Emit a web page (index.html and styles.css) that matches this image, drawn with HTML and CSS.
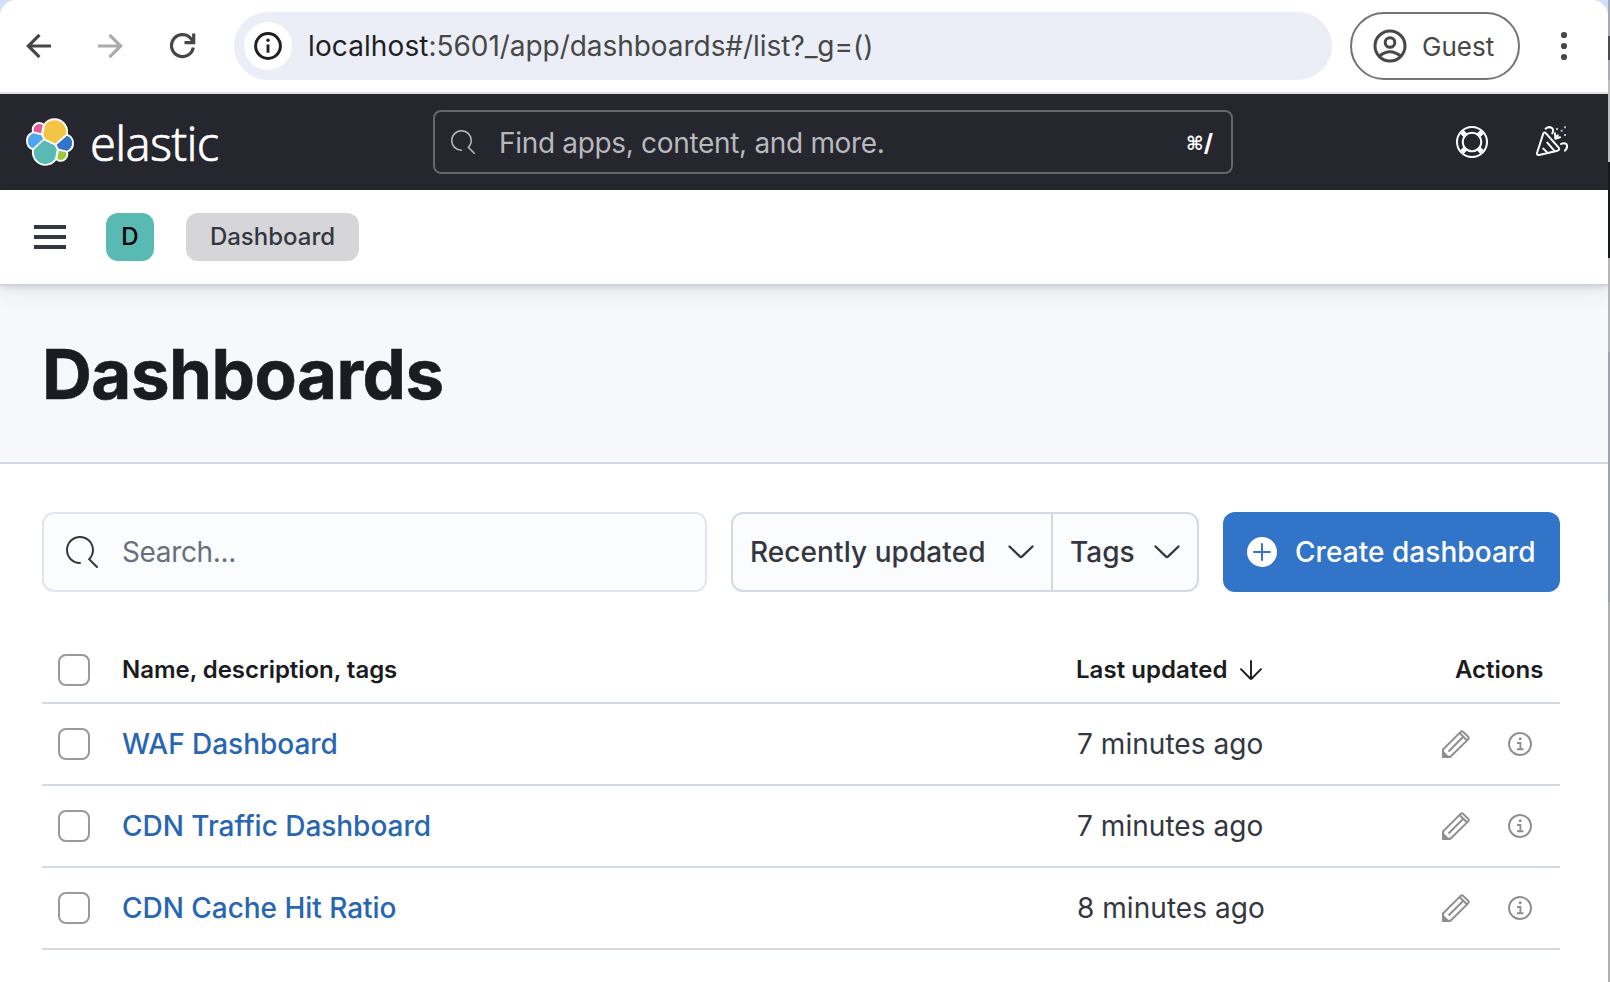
FILE: index.html
```html
<!DOCTYPE html>
<html lang="en">
<head>
<meta charset="utf-8">
<title>Dashboards - Elastic</title>
<link rel="stylesheet" href="styles.css">
</head>
<body>
<svg class="defs" width="0" height="0">
  <symbol id="search" viewBox="0 0 16 16"><path d="M11.271 11.978l3.872 3.873a.502.502 0 00.708 0 .502.502 0 000-.708l-3.565-3.564c2.380-2.747 2.267-6.923-.342-9.532-2.730-2.730-7.170-2.730-9.898 0-2.728 2.729-2.728 7.170 0 9.900a6.955 6.955 0 004.949 2.050.5.5 0 000-1 5.960 5.960 0 01-4.242-1.757 6.010 6.010 0 010-8.486 6.004 6.004 0 018.484 0 6.010 6.010 0 010 8.486.5.5 0 00-.034.738z"/></symbol>
  <symbol id="chevron" viewBox="0 0 26 14"><path d="M1.500 1.500L11.800 11.400Q13 12.500 14.200 11.400L24.500 1.500" fill="none" stroke="currentColor" stroke-width="2.300" stroke-linecap="round"/></symbol>
  <symbol id="pencil" viewBox="0 0 28 28"><path d="M1 26.800V19.500L18.600 1.900Q19.900.700 21.200 1.900L26.100 6.800Q27.300 8.100 26.100 9.400L8.500 26.800ZM6.500 21.500L21 7M17.800 3.200L24.800 10.200" fill="none" stroke="currentColor" stroke-width="2"/><path d="M0 19.500L8.500 28H1.500Q0 28 0 26.500Z"/></symbol>
  <symbol id="info" viewBox="0 0 24 24"><circle cx="12" cy="12" r="11" fill="none" stroke="currentColor" stroke-width="1.900"/><circle cx="12.200" cy="6.800" r="1.500"/><path d="M9 11h3.400v6.200M8.900 17.300h6.600" fill="none" stroke="currentColor" stroke-width="1.900"/></symbol>
</svg>
<div class="screen">
<div class="window">
  <div class="toolbar">
    <svg class="line nav-back" width="26" height="26" viewBox="0 0 26 26"><path d="M25 13H3M13.500 1.800L2.300 13l11.200 11.200"/></svg>
    <svg class="line nav-forward" width="26" height="26" viewBox="0 0 26 26"><path d="M1 13h22M12.500 1.800L23.700 13 12.500 24.200"/></svg>
    <svg class="line nav-reload" width="26" height="26" viewBox="0 0 26 26"><path d="M23.300 14.500A11 11 0 1 1 21.500 6.300L24 9.600M23.700 0.500V9.600H14.500"/></svg>
    <div class="address">
      <span class="site-info"><svg width="28" height="28" viewBox="0 0 28 28"><circle cx="14" cy="14" r="12.400" fill="none" stroke="currentColor" stroke-width="3"/><path d="M14 12.500v8.200" stroke="currentColor" stroke-width="2.900"/><circle cx="14" cy="8.300" r="1.700"/></svg></span>
      <span class="url"><b>localhost</b>:5601/app/dashboards#/list?_g=()</span>
    </div>
    <div class="guest">
      <svg class="line" width="34" height="34" viewBox="0 0 34 34" stroke="currentColor" stroke-width="3"><circle cx="17" cy="17" r="15"/><circle cx="17" cy="13.500" r="4.800"/><path d="M6.500 27Q17 18.500 27.500 27"/></svg>
      <span>Guest</span>
    </div>
    <svg class="more" width="8" height="30" viewBox="0 0 8 30"><circle cx="4" cy="4" r="3.100"/><circle cx="4" cy="15" r="3.100"/><circle cx="4" cy="26" r="3.100"/></svg>
  </div>

  <div class="header">
    <svg class="logo" width="50" height="50" viewBox="-.667 -.667 33.333 33.333">
      <g fill="#fff" stroke="#fff" stroke-width="2.500" stroke-linejoin="round">
        <path d="M12.580 13.787l7.002 3.211 7.066-6.213a7.849 7.849 0 00.152-1.557c0-4.287-3.468-7.775-7.730-7.775a7.697 7.697 0 00-6.374 3.380l-1.176 6.126z"/>
        <path d="M5.333 21.215a7.886 7.886 0 00-.153 1.577c0 4.300 3.486 7.799 7.777 7.799a7.750 7.750 0 006.402-3.407l1.166-6.106-1.556-2.991-7.029-3.218z"/>
        <path d="M5.288 9.067l4.800 1.138L11.140 4.725a3.785 3.785 0 00-2.284-.758A3.806 3.806 0 005.070 7.780c0 .438.073.876.217 1.287z"/>
        <path d="M4.872 10.214c-2.140.710-3.596 2.770-3.596 5.037a5.277 5.277 0 003.395 4.936l6.733-6.112-1.236-2.652z"/>
        <path d="M20.873 27.184a3.758 3.758 0 002.277.772 3.793 3.793 0 003.785-3.803 3.790 3.790 0 00-.210-1.252l-4.790-1.121z"/>
        <path d="M21.848 20.563l5.280 1.240c2.140-.710 3.596-2.770 3.596-5.037a5.277 5.277 0 00-3.403-4.930l-6.900 6.063z"/>
      </g>
      <path fill="#f4c544" d="M12.580 13.787l7.002 3.211 7.066-6.213a7.849 7.849 0 00.152-1.557c0-4.287-3.468-7.775-7.730-7.775a7.697 7.697 0 00-6.374 3.380l-1.176 6.126z"/>
      <path fill="#58bab3" d="M5.333 21.215a7.886 7.886 0 00-.153 1.577c0 4.300 3.486 7.799 7.777 7.799a7.750 7.750 0 006.402-3.407l1.166-6.106-1.556-2.991-7.029-3.218z"/>
      <path fill="#de5c98" d="M5.288 9.067l4.800 1.138L11.140 4.725a3.785 3.785 0 00-2.284-.758A3.806 3.806 0 005.070 7.780c0 .438.073.876.217 1.287z"/>
      <path fill="#50a5ef" d="M4.872 10.214c-2.140.710-3.596 2.770-3.596 5.037a5.277 5.277 0 003.395 4.936l6.733-6.112-1.236-2.652z"/>
      <path fill="#9bc93c" d="M20.873 27.184a3.758 3.758 0 002.277.772 3.793 3.793 0 003.785-3.803 3.790 3.790 0 00-.210-1.252l-4.790-1.121z"/>
      <path fill="#3274c6" d="M21.848 20.563l5.280 1.240c2.140-.710 3.596-2.770 3.596-5.037a5.277 5.277 0 00-3.403-4.930l-6.900 6.063z"/>
    </svg>
    <span class="wordmark">elastic</span>
    <div class="global-search">
      <svg width="24" height="24"><use href="#search"/></svg>
      <span class="placeholder">Find apps, content, and more.</span>
      <span class="shortcut"><i>⌘</i>/</span>
    </div>
    <svg class="line help" width="32" height="32" viewBox="0 0 32 32" stroke="#fff" stroke-width="2"><circle cx="16" cy="16" r="15"/><circle cx="16" cy="16" r="9.300"/><path stroke-width="5" d="M9.600 9.600L6 6M22.400 9.600L26 6M9.600 22.400L6 26M22.400 22.400L26 26"/></svg>
    <svg class="line cheer" width="32" height="32" viewBox="0 0 96 96" stroke="#fff" stroke-width="6" stroke-linecap="round" stroke-linejoin="round"><path d="M22 22Q26 17 30 22L68 65Q72 71 65 74L9 87Q2 88 3 81ZM34 50L54 73M22 68L34 80M29 8Q38 0 48 6Q54 12 49 22M57 22L58 38L72 34M58 38L65 28M75 54Q84 49 91 54Q97 63 87 74"/><path stroke="none" fill="#b9babd" d="M60 6h6v6h-6zM74 11h6v6h-6zM84 1h6v6h-6zM84 24h6v6h-6z"/></svg>
  </div>

  <div class="breadcrumbs">
    <span class="menu"></span>
    <span class="space">D</span>
    <span class="crumb">Dashboard</span>
  </div>

  <div class="page-title"><h1>Dashboards</h1></div>

  <div class="content">
    <div class="controls">
      <div class="search-box">
        <svg width="32" height="32"><use href="#search"/></svg>
        <span>Search...</span>
      </div>
      <div class="filters">
        <span class="filter sort"><span>Recently updated</span><svg width="26" height="14"><use href="#chevron"/></svg></span>
        <span class="filter tags"><span>Tags</span><svg width="26" height="14"><use href="#chevron"/></svg></span>
      </div>
      <div class="create">
        <svg width="30" height="30" viewBox="0 0 30 30"><circle cx="15" cy="15" r="15" fill="#fff"/><path d="M15 6.300v17.400M6.300 15h17.400" stroke="#3275c8" stroke-width="2"/></svg>
        <span>Create dashboard</span>
      </div>
    </div>

    <div class="table">
      <div class="row head">
        <span class="check"></span><span class="name">Name, description, tags</span>
        <span class="updated">Last updated<svg class="line" width="22" height="20" viewBox="0 0 22 20" stroke="currentColor" stroke-width="1.900" stroke-linecap="round" stroke-linejoin="round"><path d="M11 1v18M1 9.200L10.200 18.500Q11 19.300 11.800 18.500L21 9.200"/></svg></span>
        <span class="actions">Actions</span>
      </div>
      <div class="row">
        <span class="check"></span><span class="name">WAF Dashboard</span><span class="updated">7 minutes ago</span>
        <span class="actions"><svg width="28" height="28"><use href="#pencil"/></svg><svg width="24" height="24"><use href="#info"/></svg></span>
      </div>
      <div class="row">
        <span class="check"></span><span class="name">CDN Traffic Dashboard</span><span class="updated">7 minutes ago</span>
        <span class="actions"><svg width="28" height="28"><use href="#pencil"/></svg><svg width="24" height="24"><use href="#info"/></svg></span>
      </div>
      <div class="row">
        <span class="check"></span><span class="name">CDN Cache Hit Ratio</span><span class="updated">8 minutes ago</span>
        <span class="actions"><svg width="28" height="28"><use href="#pencil"/></svg><svg width="24" height="24"><use href="#info"/></svg></span>
      </div>
    </div>
  </div>
</div>
<div class="behind"></div>
</div>
</body>
</html>
```

FILE: styles.css
```css
* { box-sizing: border-box; }
body {
  margin: 0;
  font-family: Inter, "Liberation Sans", sans-serif;
  font-size: 28px;
  line-height: 40px;
  color: #343741;
  white-space: nowrap;
}
svg { display: block; flex: none; fill: currentColor; }
.line { fill: none; }
.defs { position: absolute; }
.screen { display: flex; width: 1610px; height: 982px; overflow: hidden; background: #d3e0fc; }
.window { width: 1608px; height: 982px; background: #fff; border-radius: 16px 16px 0 0; overflow: hidden; }
.behind {
  width: 2px;
  background: linear-gradient(#a6a7b5 0 36px, #4b4b50 36px 60px, #a9abb8 60px 80px, #bdbdbd 80px 162px, #17181d 162px 258px, #b5b5b5 258px 352px, #9ba3ad 352px 602px, #b0b0b0 602px);
}

.toolbar {
  display: flex;
  align-items: center;
  height: 94px;
  padding-left: 26px;
  border-bottom: 2px solid #e0e3e1;
  color: #474747;
}
.nav-back, .nav-forward, .nav-reload { stroke: #474747; stroke-width: 3.200; }
.nav-forward { margin-left: 45px; stroke: #ababab; }
.nav-reload { margin-left: 47px; }
.address {
  display: flex;
  align-items: center;
  width: 1098px;
  height: 68px;
  margin-left: 38px;
  padding-left: 10px;
  border-radius: 34px;
  background: #ebeef7;
}
.site-info {
  display: flex;
  align-items: center;
  justify-content: center;
  width: 48px;
  height: 48px;
  border-radius: 50%;
  background: #fff;
  color: #1f1f1f;
}
.url { margin-left: 16px; letter-spacing: -.05px; }
.url b { font-weight: 400; color: #1f1f1f; letter-spacing: .1px; }
.guest {
  display: flex;
  align-items: center;
  width: 170px;
  height: 68px;
  margin-left: 18px;
  padding-left: 21px;
  border: 2px solid #747474;
  border-radius: 34px;
}
.guest span { margin-left: 15px; padding-top: 2px; font-size: 26px; }
.more { margin-left: 40px; }

.header {
  display: flex;
  align-items: center;
  height: 96px;
  padding-left: 25px;
  background: #25262e;
  color: #fff;
}
.wordmark {
  width: 341px;
  margin-left: 15px;
  padding-top: 1px;
  font-family: "Noto Sans", "Open Sans", sans-serif;
  font-size: 47px;
  font-weight: 300;
  line-height: 60px;
  letter-spacing: -.7px;
  -webkit-text-stroke: .6px #fff;
}
.global-search {
  display: flex;
  align-items: center;
  width: 800px;
  height: 64px;
  margin-left: 2px;
  padding: 0 18px 0 16px;
  border: 2px solid #66676d;
  border-radius: 8px;
  color: #b8b9bd;
}
.placeholder { flex: 1; margin-left: 24px; padding-top: 2px; letter-spacing: -.32px; }
.shortcut { display: flex; align-items: center; padding-top: 2px; color: #fff; font-size: 24px; font-weight: 700; }
.shortcut i { font-family: "DejaVu Sans", sans-serif; font-size: 19px; font-style: normal; }
.help { margin-left: 223px; }
.cheer { margin-left: 48px; }

.breadcrumbs {
  display: flex;
  align-items: center;
  position: relative;
  z-index: 1;
  height: 96px;
  padding-left: 34px;
  border-bottom: 2px solid #cfd4e0;
  background: #fff;
  box-shadow: 0 2px 5px rgba(0,0,0,.1), 0 8px 20px rgba(0,0,0,.06);
}
.menu { width: 32px; height: 24px; border-top: 4px solid #343741; border-bottom: 4px solid #343741; background: linear-gradient(#343741, #343741) 0 6px / 100% 4px no-repeat; }
.space {
  width: 48px;
  margin-left: 40px;
  border-radius: 12px;
  background: #58bab3;
  color: #000;
  font-size: 24px;
  font-weight: 500;
  line-height: 48px;
  text-align: center;
}
.crumb {
  width: 173px;
  margin-left: 32px;
  border-radius: 12px;
  background: #d6d6d9;
  font-size: 24px;
  font-weight: 500;
  line-height: 48px;
  text-align: center;
}

.page-title { height: 178px; padding: 48px 42px 0; border-bottom: 2px solid #d3dae6; background: #f7f8fc; }
h1 { margin: 0; font-size: 69px; font-weight: 700; line-height: 80px; letter-spacing: -.5px; color: #1a1c21; -webkit-text-stroke: .6px #1a1c21; }

.content { padding: 48px 48px 0 42px; }
.controls { display: flex; height: 80px; font-weight: 500; }
.search-box {
  display: flex;
  align-items: center;
  width: 665px;
  padding-left: 22px;
  border: 2px solid #e2e5f1;
  border-radius: 12px;
  background: #fbfcfe;
}
.search-box span { margin-left: 24px; font-weight: 400; color: #69707d; letter-spacing: -.35px; }
.filters { display: flex; margin-left: 24px; border: 2px solid #d3dae6; border-radius: 12px; background: #fbfcfd; }
.filter { display: flex; align-items: center; justify-content: space-between; padding: 0 17px; }
.sort { width: 320px; border-right: 2px solid #d3dae6; letter-spacing: .07px; }
.tags { width: 144px; }
.create {
  display: flex;
  align-items: center;
  width: 337px;
  margin-left: 24px;
  padding-left: 24px;
  border-radius: 12px;
  background: #3275c8;
  color: #fff;
}
.create span { margin-left: 18px; letter-spacing: .05px; }

.table { padding-top: 46px; }
.row { display: flex; align-items: center; height: 82px; padding-left: 16px; border-bottom: 2px solid #d3dae6; }
.head { height: 66px; font-size: 24px; font-weight: 600; color: #1a1c21; }
.check { width: 32px; height: 32px; border: 2px solid #999; border-radius: 8px; }
.name { width: 954px; margin-left: 32px; font-weight: 500; color: #2866b2; letter-spacing: -.03px; }
.head .name { font-weight: 600; color: inherit; letter-spacing: -.04px; }
.updated { display: flex; align-items: center; width: 363px; padding-left: 1px; letter-spacing: .05px; }
.head .updated { padding: 0; }
.updated svg { margin-left: 12px; }
.actions { display: flex; align-items: center; gap: 38px; color: #8f8f8f; padding-left: 3px; }
.head .actions { padding: 0; margin-left: 16px; color: inherit; }
```
